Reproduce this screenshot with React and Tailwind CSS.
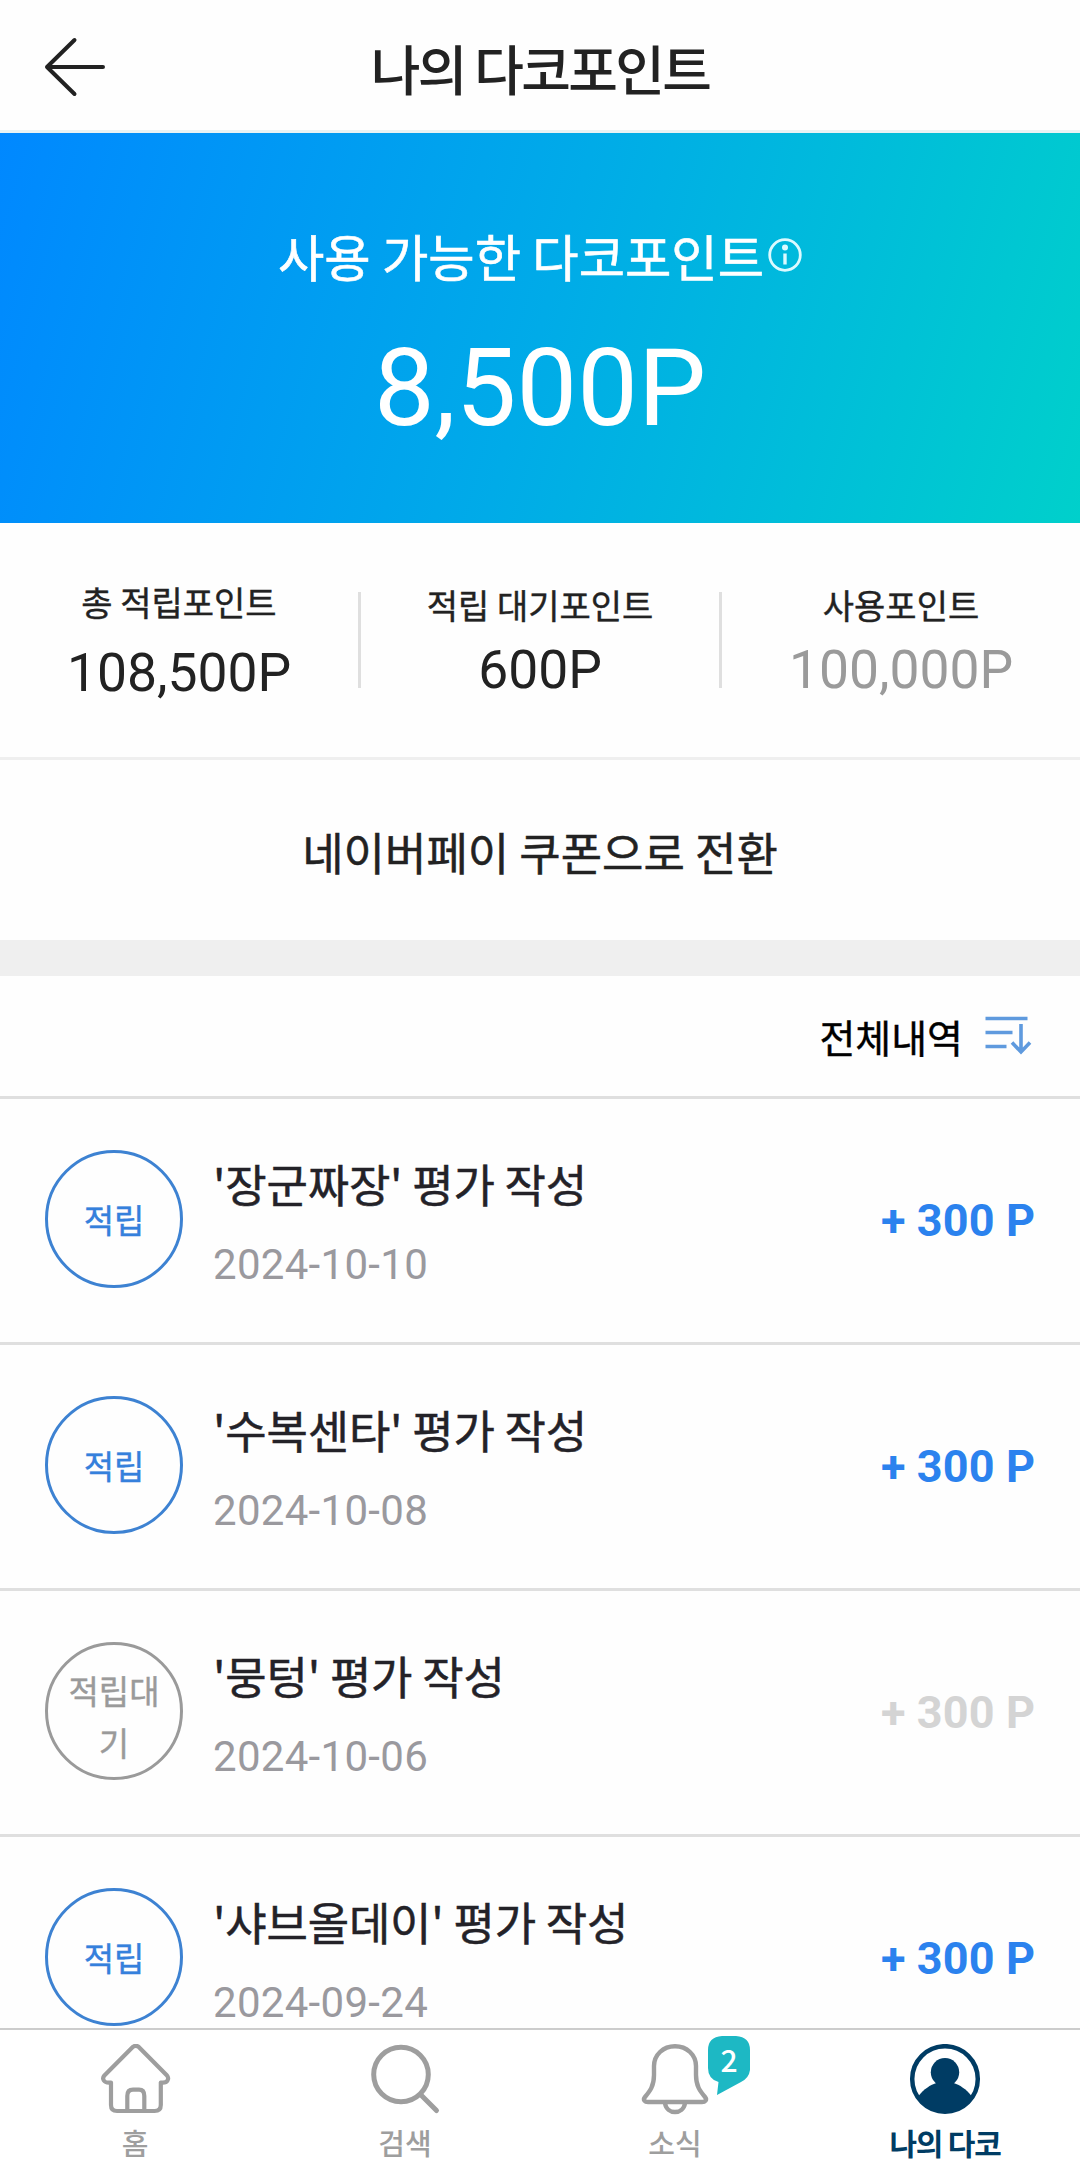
import React from 'react';

const history = [
  { id: 1, status: '적립', title: "'장군짜장' 평가 작성", date: '2024-10-10', amount: '+ 300 P', done: true },
  { id: 2, status: '적립', title: "'수복센타' 평가 작성", date: '2024-10-08', amount: '+ 300 P', done: true },
  { id: 3, status: '적립대기', title: "'뭉텅' 평가 작성", date: '2024-10-06', amount: '+ 300 P', done: false },
  { id: 4, status: '적립', title: "'샤브올데이' 평가 작성", date: '2024-09-24', amount: '+ 300 P', done: true },
];

const BackIcon = () => (
  <svg width="62" height="62" viewBox="0 0 62 62" fill="none" stroke="#222222" strokeWidth="4" strokeLinecap="round" strokeLinejoin="round">
    <path d="M30.5 4 L3 31 L30.5 58 M3 31 H59" />
  </svg>
);

const InfoIcon = () => (
  <svg width="34" height="34" viewBox="0 0 34 34" fill="none">
    <circle cx="17" cy="17" r="15.3" stroke="#dcfaff" strokeWidth="2.8" />
    <circle cx="17" cy="9.5" r="3" fill="#dcfaff" />
    <path d="M17 15.5 V26.5" stroke="#dcfaff" strokeWidth="3.4" />
  </svg>
);

const SortIcon = () => (
  <svg width="48" height="42" viewBox="0 0 48 42" fill="none" stroke="#5f9ade" strokeWidth="3.6">
    <path d="M0.5 3.5 H42.5 M0.5 17.5 H27.5 M0.5 31.5 H21.5 M36 9 V37 M27 27.5 L36 37 L45 27.5" />
  </svg>
);

const HomeIcon = () => (
  <svg width="72" height="72" viewBox="0 0 72 72" fill="none" stroke="#9e9e9e" strokeWidth="4.2" strokeLinejoin="round">
    <path d="M33.5 3.2 Q36.7 0.5 40 3.2 L68 31.5 Q70 34 68.5 36.5 Q67 39.2 61.8 38.5 V61 Q61.8 67 55.5 67 H18 Q12 67 12 61 V38.5 Q6.5 39.2 4.8 36.5 Q3.2 34 5.4 31.5 Z" />
    <path d="M28.3 67 V52 Q28.3 45.7 34 45.7 H40 Q45.3 45.7 45.3 52 V67" />
  </svg>
);

const SearchIcon = () => (
  <svg width="72" height="72" viewBox="0 0 72 72" fill="none" stroke="#9e9e9e" strokeLinecap="round">
    <circle cx="32" cy="30.5" r="27.3" strokeWidth="5" />
    <path d="M52 51 L67.5 66.5" strokeWidth="5" />
  </svg>
);

const BellIcon = () => (
  <svg width="72" height="72" viewBox="0 0 72 72" fill="none" stroke="#9e9e9e" strokeWidth="4.4" strokeLinejoin="round">
    <path d="M36 2.2 C24 2.2 15 11 15 22 V31 C15 42 11 47 6 53 C3.5 56 6 58 9 58 H63 C66 58 68.5 56 66 53 C61 47 57 42 57 31 V22 C57 11 48 2.2 36 2.2 Z" />
    <path d="M26 59 C27.5 71 44.5 71 46 59" />
  </svg>
);

const UserIcon = () => (
  <svg width="72" height="72" viewBox="0 0 72 72" fill="none">
    <circle cx="36" cy="35" r="32.8" stroke="#003c64" strokeWidth="4.5" />
    <circle cx="36" cy="28.3" r="14.2" fill="#003c64" />
    <path d="M9.5 52 C15 45 21 41 28 38.7 H44 C51 41 57 45 62.5 52 C57 63 48 69 36 69 C24 69 15 63 9.5 52 Z" fill="#003c64" />
  </svg>
);

const Header = () => (
  <header className="relative flex h-[133px] shrink-0 items-center justify-center border-b-3 border-[#e8f3f4]">
    <button className="absolute left-[44px] top-[36px]" aria-label="뒤로">
      <BackIcon />
    </button>
    <h1 className="pt-1 text-[54px] font-medium tracking-[-2.7px] text-[#222222]">나의 다코포인트</h1>
  </header>
);

const Stat = ({ label, value, wrap, color }) => (
  <div className={`flex flex-1 flex-col items-center text-[#222222] ${wrap}`}>
    <span className="text-[34px] leading-[48px] [-webkit-text-stroke:0.4px]">{label}</span>
    <span className={`font-['Roboto',sans-serif] text-[53.4px] leading-[64px] ${color}`}>{value}</span>
  </div>
);

const HistoryRow = ({ item }) => (
  <li className="flex h-[246px] items-start border-b-3 border-[#dfdfdf] px-[45px] pt-[51px]">
    <div
      className={`flex size-[138px] shrink-0 items-center justify-center rounded-full border-3 text-center text-[33px] leading-[52px] break-all [-webkit-text-stroke:0.4px] ${item.done ? 'border-[#3d82d2] text-[#3580dc]' : 'border-[#9a9a9a] pt-[10px] text-[#9a9a9a]'}`}
    >
      <span className="w-[100px]">{item.status}</span>
    </div>
    <div className="ml-[30px] flex-1">
      <p className="text-[45px] leading-[68px] tracking-[-0.2px] text-[#232228] [-webkit-text-stroke:0.5px]">{item.title}</p>
      <p className="mt-[22px] font-['Roboto',sans-serif] text-[42px] leading-[50px] tracking-[0.3px] text-[#9a999e]">{item.date}</p>
    </div>
    <span className={`mt-[45px] font-['Roboto',sans-serif] text-[45px] leading-[52px] font-bold tracking-[0.1px] ${item.done ? 'text-[#2b82ee]' : 'text-[#d4d4d4]'}`}>{item.amount}</span>
  </li>
);

const Tab = ({ icon, label, color, badge }) => (
  <button className={`relative flex w-[270px] flex-col items-center pt-[14px] ${color}`}>
    {icon}
    <span className="mt-[5px] leading-[42px]">{label}</span>
    {badge && (
      <span className="absolute left-[168px] top-[6px] flex h-[58px] w-[42px] justify-center">
        <svg className="absolute inset-0" width="42" height="59" viewBox="0 0 42 59" fill="#1db8c4">
          <path d="M14 0 H28 Q42 1 42 14 V34 Q41 42 33 46 L9 59 L10.5 46 Q0 43 0 32 V14 Q0 1 14 0 Z" />
        </svg>
        <span className="relative text-[30px] leading-[46px] text-white">{badge}</span>
      </span>
    )}
  </button>
);

const App = () => {
  return (
    <div className="flex h-[2177px] w-[1080px] flex-col overflow-hidden bg-[#fefefe] font-['Noto_Sans_CJK_KR',sans-serif]">
      <Header />

      <section className="flex h-[390px] shrink-0 flex-col items-center bg-[linear-gradient(106deg,#0088ff_0%,#00abe8_50%,#00d0cb_100%)] pt-[86px] text-white">
        <div className="flex items-center">
          <span className="text-[50.4px] leading-[74px] [-webkit-text-stroke:0.6px]">사용 가능한 다코포인트</span>
          <span className="ml-[4px] pb-[2px]">
            <InfoIcon />
          </span>
        </div>
        <strong className="mt-[31px] font-['Roboto',sans-serif] text-[108px] leading-[128px] font-normal">8,500P</strong>
      </section>

      <section className="flex h-[237px] shrink-0 items-start border-b-3 border-[#efefef] pt-[55px]">
        <Stat label="총 적립포인트" value="108,500P" wrap="gap-[15px]" color="text-[#222222]" />
        <div className="mt-[14px] h-[96px] w-[3px] bg-[#dfdfdf]" />
        <Stat label="적립 대기포인트" value="600P" wrap="gap-[9px] pt-[3px]" color="text-[#222222]" />
        <div className="mt-[14px] h-[96px] w-[3px] bg-[#dfdfdf]" />
        <Stat label="사용포인트" value="100,000P" wrap="gap-[9px] pt-[3px]" color="text-[#9a9a9a]" />
      </section>

      <button className="flex h-[180px] shrink-0 items-center justify-center pt-[3px] text-[45px] text-[#222222] [-webkit-text-stroke:0.5px]">
        네이버페이 쿠폰으로 전환
      </button>

      <div className="h-[36px] shrink-0 bg-[#efefef]" />

      <div className="flex h-[123px] shrink-0 items-center justify-end border-b-3 border-[#dfdfdf] pr-[47px]">
        <span className="mr-[22px] text-[39px] text-black [-webkit-text-stroke:0.4px]">전체내역</span>
        <SortIcon />
      </div>

      <ul className="min-h-0 flex-1 overflow-hidden">
        {history.map((item) => (
          <HistoryRow key={item.id} item={item} />
        ))}
      </ul>

      <nav className="flex h-[149px] shrink-0 border-t-2 border-[#cccccc] bg-white">
        <Tab icon={<HomeIcon />} label="홈" color="text-[29px] font-medium text-[#9e9e9e]" />
        <Tab icon={<SearchIcon />} label="검색" color="text-[29px] font-medium text-[#9e9e9e]" />
        <Tab icon={<BellIcon />} label="소식" color="text-[29px] font-medium text-[#9e9e9e]" badge="2" />
        <Tab icon={<UserIcon />} label="나의 다코" color="text-[30px] font-bold tracking-[-1.2px] text-[#003c64]" />
      </nav>
    </div>
  );
};

export default App;
